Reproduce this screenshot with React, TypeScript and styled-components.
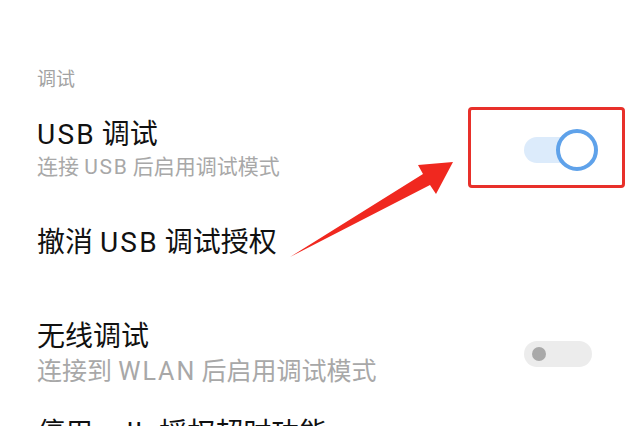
import React from "react";
import styled, { createGlobalStyle } from "styled-components";

const Global = createGlobalStyle`
  html, body { margin: 0; padding: 0; background: #ffffff; }
  body { font-family: Roboto, "Noto Sans CJK SC", sans-serif; overflow: hidden; }
`;

const Page = styled.div`
  position: relative;
  width: 640px;
  height: 426px;
  overflow: hidden;
  background: #fff;
  padding: 67px 48px 0 37px;
  box-sizing: border-box;
`;

const SectionHeader = styled.div`
  font-size: 19px;
  line-height: 25px;
  color: #a3a3a3;
`;

const Row = styled.div<{ $top: number }>`
  display: flex;
  align-items: center;
  justify-content: space-between;
  margin-top: ${(p) => p.$top}px;
`;

const TextCol = styled.div`
  display: flex;
  flex-direction: column;
`;

const Title = styled.div`
  font-size: 28px;
  line-height: 34px;
  color: #111;
  white-space: nowrap;
`;

const Subtitle = styled.div<{ $size?: number; $gap?: number }>`
  font-size: ${(p) => p.$size ?? 21}px;
  line-height: 30px;
  color: #a8a8a8;
  margin-top: ${(p) => p.$gap ?? 0}px;
  white-space: nowrap;
`;

const Latin = styled.span`
  letter-spacing: 0.08em;
  margin-right: -0.04em;
`;

const Track = styled.div<{ $on: boolean }>`
  position: relative;
  width: 68px;
  height: 26px;
  border-radius: 13px;
  background: ${(p) => (p.$on ? "#dcebfb" : "#ececec")};
  flex-shrink: 0;
`;

const Knob = styled.div<{ $on: boolean }>`
  position: absolute;
  top: 50%;
  border-radius: 50%;
  box-sizing: border-box;
  ${(p) =>
    p.$on
      ? `
    width: 42px; height: 42px;
    right: -6px;
    margin-top: -21px;
    background: #fff;
    border: 4px solid #5fa2ea;
  `
      : `
    width: 14px; height: 14px;
    left: 8px;
    margin-top: -7px;
    background: #a9a9a9;
  `}
`;

const Switch = ({ on }: { on: boolean }) => (
  <Track $on={on}>
    <Knob $on={on} />
  </Track>
);

const HighlightBox = styled.div`
  position: absolute;
  left: 468px;
  top: 107px;
  width: 157px;
  height: 81px;
  box-sizing: border-box;
  border: 3px solid #e8302a;
  border-radius: 4px;
`;

const ArrowSvg = styled.svg`
  position: absolute;
  left: 0;
  top: 0;
  pointer-events: none;
`;

export default function App() {
  return (
    <>
      <Global />
      <Page>
        <SectionHeader>调试</SectionHeader>
        <Row $top={26}>
          <TextCol>
            <Title>
              <Latin>USB</Latin> 调试
            </Title>
            <Subtitle>
              连接 <Latin>USB</Latin> 后启用调试模式
            </Subtitle>
          </TextCol>
          <Switch on />
        </Row>
        <Row $top={44}>
          <TextCol>
            <Title>
              撤消 <Latin>USB</Latin> 调试授权
            </Title>
          </TextCol>
        </Row>
        <Row $top={60}>
          <TextCol>
            <Title>无线调试</Title>
            <Subtitle $size={25} $gap={3}>
              连接到 <Latin>WLAN</Latin> 后启用调试模式
            </Subtitle>
          </TextCol>
          <Switch on={false} />
        </Row>
        <Row $top={30}>
          <TextCol>
            <Title>
              停用 <Latin>adb</Latin> 授权超时功能
            </Title>
          </TextCol>
        </Row>
        <HighlightBox />
        <ArrowSvg width="640" height="426" viewBox="0 0 640 426">
          <polygon
            points="290,257 423,174 418,165 453,162 436,194 430,185"
            fill="#f0281f"
          />
        </ArrowSvg>
      </Page>
    </>
  );
}
